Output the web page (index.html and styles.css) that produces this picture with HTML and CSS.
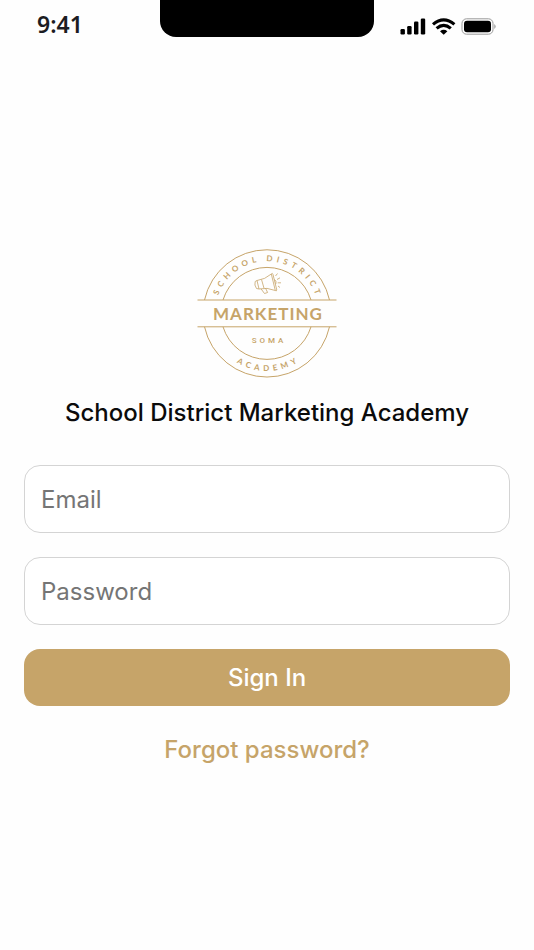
FILE: index.html
```html
<!DOCTYPE html>
<html lang="en">
<head>
<meta charset="utf-8">
<meta name="viewport" content="width=device-width, initial-scale=1">
<title>Sign In</title>
<link rel="stylesheet" href="styles.css">
</head>
<body>
<div class="screen">
  <header class="status-bar">
    <div class="time">9:41</div>
    <div class="notch"></div>
    <svg class="status-icons" width="96" height="18" viewBox="0 0 96 18" aria-hidden="true">
      <rect x="0.500" y="11" width="4.400" height="5.500" rx="1.200"/>
      <rect x="7.200" y="8" width="4.400" height="8.500" rx="1.200"/>
      <rect x="14" y="3.500" width="4.400" height="13" rx="1.200"/>
      <rect x="20.800" y="0.500" width="4.400" height="16" rx="1.200"/>
      <g fill="none" stroke="#000" stroke-width="3.200">
        <path d="M33 6.400 Q43.700 -2.600 54.400 6.400"/>
        <path d="M36.600 10.400 Q43.700 4.400 50.800 10.400"/>
      </g>
      <path d="M43.700 16.800 L40 13.200 Q43.700 10.400 47.400 13.200 Z"/>
      <rect x="62" y="0.800" width="31" height="15.400" rx="4.500" fill="none" stroke="#999"/>
      <rect x="64" y="2.800" width="27" height="11.400" rx="3"/>
      <path d="M94.300 6 Q97 8.500 94.300 11 Z" fill="#999"/>
    </svg>
  </header>
  <main class="content">
    <svg class="logo" width="140" height="130" viewBox="197 248.500 140 130" role="img" aria-label="School District Marketing Academy logo">
      <defs>
        <path id="arc-top" d="M215.200 313.500 A51.800 51.800 0 1 1 318.800 313.500"/>
        <path id="arc-bottom" d="M209 313.500 A58 58 0 0 0 325 313.500"/>
      </defs>
      <g class="logo-lines">
        <path d="M204.500 300.500 A64 64 0 0 1 329.500 300.500 M223 300.500 A46 46 0 0 1 311 300.500"/>
        <path d="M204.500 327.300 A64 64 0 0 0 329.500 327.300 M223 327.300 A46 46 0 0 0 311 327.300"/>
        <path d="M197.500 300.500 H336.500 M197.500 327.300 H336.500"/>
      </g>
      <g class="megaphone">
        <path d="M257 281 Q265 280 271.300 274.500 L275.300 291 Q267 287.500 259 289.500 Z"/>
        <path d="M257 281 L255.200 282 Q254 285.500 256.500 289 L259 289.500 M261.500 280 L264 288.700"/>
        <path d="M271.300 274.500 Q272.500 273 273 275 L276.800 290.500 Q276.500 292 275.300 291 M274.300 280 Q277 281 275.800 284.500"/>
        <path d="M261 289.300 L264.500 294 L267.600 293 L265.500 288.600"/>
        <path d="M275.500 276.500 L277.500 274 M277 280 L280 278.300 M277.700 283.300 L281 283.300 M278 286.500 L280 288"/>
      </g>
      <g class="logo-text">
        <text class="ring-text"><textPath href="#arc-top" startOffset="51%">SCHOOL DISTRICT</textPath></text>
        <text class="ring-text"><textPath href="#arc-bottom" startOffset="51%">ACADEMY</textPath></text>
        <text class="logo-name" x="268" y="320">MARKETING</text>
        <text class="logo-short" x="269" y="343.500">SOMA</text>
      </g>
    </svg>
    <h1 class="title">School District Marketing Academy</h1>
    <form class="form">
      <input class="field" type="email" placeholder="Email" aria-label="Email">
      <input class="field" type="password" placeholder="Password" aria-label="Password">
      <button class="submit" type="button">Sign In</button>
    </form>
    <a class="forgot" href="#">Forgot password?</a>
  </main>
</div>
</body>
</html>
```
FILE: styles.css
```css
* {
  box-sizing: border-box;
}

body {
  margin: 0;
  background: #fefefe;
  color: #0b0b0b;
  font-family: Inter, "Liberation Sans", sans-serif;
}

.screen {
  display: flex;
  flex-direction: column;
  min-height: 100vh;
}

.status-bar {
  display: grid;
  grid-template-columns: 3fr 4fr 3fr;
  height: 66px;
}

.time {
  padding-left: 37px;
  color: #1c1c22;
  font: 600 23px/48px "Noto Sans", sans-serif;
}

.notch {
  height: 37px;
  background: #000;
  border-radius: 0 0 16px 16px;
}

.status-icons {
  justify-self: end;
  margin: 18px 38px 0 0;
}

.content {
  display: flex;
  flex: 1;
  flex-direction: column;
  align-items: center;
  justify-content: center;
  padding: 0 24px;
}

.logo-lines,
.megaphone {
  fill: none;
  stroke: #c6a469;
}

.megaphone {
  stroke-width: 0.8px;
  stroke-linejoin: round;
}

.logo-text {
  fill: #c6a469;
  font-family: Lato, sans-serif;
  font-weight: 700;
  text-anchor: middle;
}

.ring-text {
  font-size: 8px;
  letter-spacing: 4px;
}

.logo-name {
  font-size: 17px;
  letter-spacing: 1px;
}

.logo-short {
  font-family: Roboto, sans-serif;
  font-size: 8px;
  font-weight: 500;
  letter-spacing: 3px;
}

.title {
  margin: 17px 0 34px;
  font-size: 24px;
  font-weight: 500;
  line-height: 36px;
  text-align: center;
}

.form {
  display: flex;
  flex-direction: column;
  gap: 24px;
  width: 100%;
}

.field,
.submit {
  width: 100%;
  border-radius: 16px;
  font-family: inherit;
  font-size: 24px;
}

.field {
  height: 68px;
  padding: 0 16px;
  border: 1px solid #d4d4d4;
  background: #fff;
}

.field::placeholder {
  color: #757575;
  opacity: 1;
}

.submit {
  height: 57px;
  border: 0;
  background: #c6a469;
  color: #fff;
  font-weight: 500;
}

.forgot {
  margin-top: 26px;
  color: #c6a469;
  font-size: 24px;
  font-weight: 500;
  line-height: 36px;
  text-decoration: none;
}
```
